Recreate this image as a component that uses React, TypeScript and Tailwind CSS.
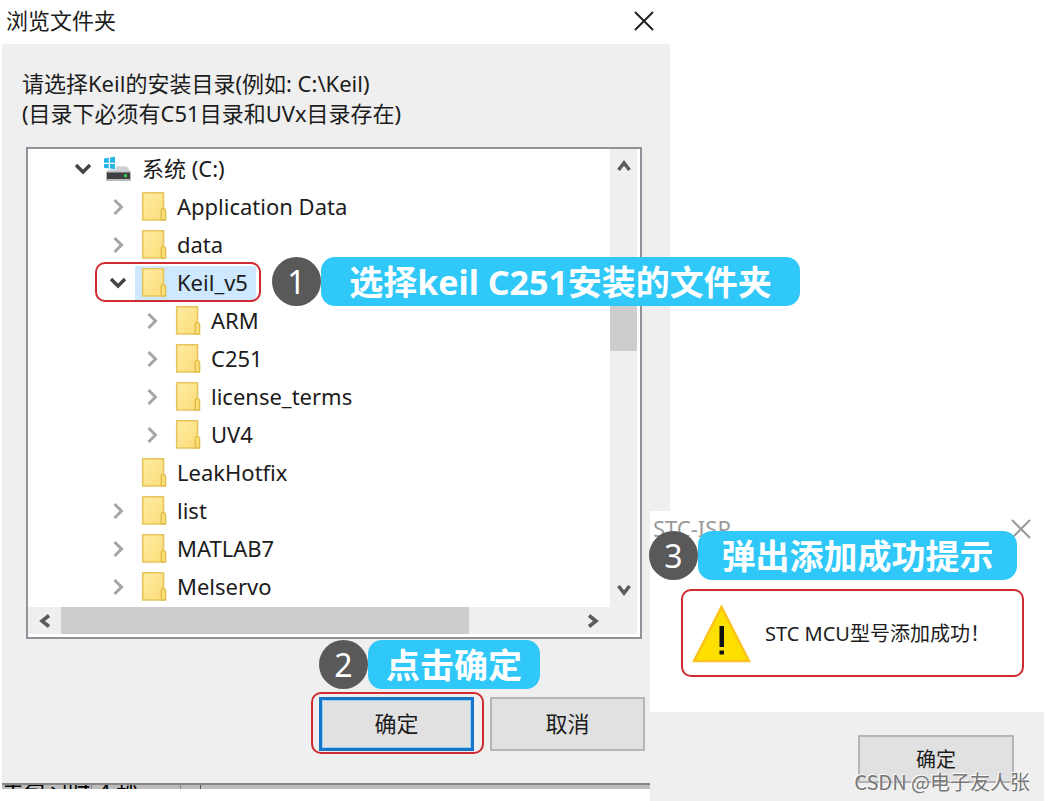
import type { ReactNode } from "react";

type IconName = "drive" | "folder";

interface TreeItem {
	name: string;
	level: 0 | 1 | 2;
	icon: IconName;
	state: "open" | "closed" | "leaf";
	selected?: boolean;
}

const items: TreeItem[] = [
	{ name: "系统 (C:)", level: 0, icon: "drive", state: "open" },
	{ name: "Application Data", level: 1, icon: "folder", state: "closed" },
	{ name: "data", level: 1, icon: "folder", state: "closed" },
	{ name: "Keil_v5", level: 1, icon: "folder", state: "open", selected: true },
	{ name: "ARM", level: 2, icon: "folder", state: "closed" },
	{ name: "C251", level: 2, icon: "folder", state: "closed" },
	{ name: "license_terms", level: 2, icon: "folder", state: "closed" },
	{ name: "UV4", level: 2, icon: "folder", state: "closed" },
	{ name: "LeakHotfix", level: 1, icon: "folder", state: "leaf" },
	{ name: "list", level: 1, icon: "folder", state: "closed" },
	{ name: "MATLAB7", level: 1, icon: "folder", state: "closed" },
	{ name: "Melservo", level: 1, icon: "folder", state: "closed" },
];

const indent = {
	0: "pl-[42px]",
	1: "pl-[77px]",
	2: "pl-[111px]",
};

function FolderIcon() {
	return (
		<svg width="30" height="30" viewBox="0 0 30 30" aria-hidden="true">
			<defs>
				<linearGradient id="folder" x1="0" y1="0" x2="1" y2="1">
					<stop offset="0" stopColor="#ffeca3" />
					<stop offset="1" stopColor="#fbdc78" />
				</linearGradient>
			</defs>
			<path
				d="M3.700 .8H24.500V28H3.700z"
				fill="url(#folder)"
				stroke="#e6c65c"
				strokeWidth="1.600"
			/>
			<path
				d="M22.300 28V18.500q0-2 2-2t2.300 2V28z"
				fill="#fade78"
				stroke="#e2bd49"
				strokeWidth="1.400"
			/>
		</svg>
	);
}

function DriveIcon() {
	return (
		<svg width="30" height="30" viewBox="0 0 30 30" aria-hidden="true">
			<path d="M7 12.500h16l4 6H2.500z" fill="#cfd0d1" />
			<path d="M2 17.500h25v9.500H2z" fill="#b9babb" />
			<path d="M3 18.500h23v6.500H3z" fill="#3d4143" />
			<circle cx="21.500" cy="21.800" r="1.700" fill="#35d04a" />
			<path d="M-1 2h13v13.500H-1z" fill="#fff" />
			<path
				d="M0 4.500l4.800-.7V8.800H0zM6 3.500l5-.8v6.100H6zM0 10h4.800v4.400l-4.800-.6zM6 10h5v5.200l-5-.7z"
				fill="#27b5e8"
			/>
		</svg>
	);
}

function Chevron({ state }: { state: TreeItem["state"] }) {
	if (state === "leaf") return <span className="w-[26px]" />;
	const open = state === "open";
	return (
		<button
			type="button"
			aria-label={open ? "Collapse" : "Expand"}
			className="flex h-[34px] w-[26px] items-center justify-center"
		>
			<svg width="20" height="20" viewBox="0 0 20 20" fill="none">
				<path
					d={open ? "M3 6l7 7 7-7" : "M6.500 3l7 7-7 7"}
					stroke={open ? "#444" : "#a6a6a6"}
					strokeWidth={open ? 3.400 : 3}
				/>
			</svg>
		</button>
	);
}

const arrows = {
	up: "M4.500 15l5.500-7 5.500 7",
	down: "M4.500 5l5.500 7 5.500-7",
	left: "M14 4.500L7 10l7 5.500",
	right: "M5 4.500L12 10l-7 5.500",
};

function ScrollArrow({ dir }: { dir: keyof typeof arrows }) {
	return (
		<button
			type="button"
			aria-label={`Scroll ${dir}`}
			className="flex h-8 w-full items-center justify-center"
		>
			<svg width="20" height="20" viewBox="0 0 20 20" fill="none">
				<path d={arrows[dir]} stroke="#5c5c5c" strokeWidth="3.600" />
			</svg>
		</button>
	);
}

function CloseButton({ color }: { color: string }) {
	return (
		<button type="button" aria-label="Close" className="p-1">
			<svg width="20" height="20" viewBox="0 0 20 20">
				<path d="M1 1l18 18M19 1L1 19" stroke={color} strokeWidth="2" />
			</svg>
		</button>
	);
}

function Callout({
	step,
	className,
	labelClass,
	children,
}: {
	step: number;
	className: string;
	labelClass: string;
	children: ReactNode;
}) {
	return (
		<div
			className={`absolute z-20 flex items-center whitespace-nowrap text-white ${className}`}
		>
			<span className="flex size-[49px] shrink-0 items-center justify-center rounded-full bg-[#595959] text-[32px] leading-none">
				{step}
			</span>
			<span
				className={`flex h-[49px] items-center justify-center rounded-[14px] bg-[#30c8f9] text-[34px] leading-none font-bold ${labelClass}`}
			>
				{children}
			</span>
		</div>
	);
}

function FolderTree() {
	return (
		<div className="mt-[18px] border-2 border-[#8f939a] bg-white pr-[3px] pb-[3px]">
			<div className="flex">
				<ul className="min-w-0 flex-1 pt-px pb-px">
					{items.map((item) => (
						<li
							key={item.name}
							className={`flex h-[38px] items-center gap-1 ${indent[item.level]}`}
						>
							<Chevron state={item.state} />
							<button
								type="button"
								className={`flex h-[34px] items-center gap-2 pr-2 pl-1 whitespace-nowrap ${
									item.selected ? "bg-[#cde8ff]" : ""
								}`}
							>
								{item.icon === "drive" ? <DriveIcon /> : <FolderIcon />}
								<span>{item.name}</span>
							</button>
						</li>
					))}
				</ul>
				<div className="flex w-[27px] flex-col bg-[#efefef]">
					<ScrollArrow dir="up" />
					<div className="flex flex-1 flex-col pt-[90px] pb-[224px]">
						<div className="flex-1 bg-[#cdcdcd]" />
					</div>
					<ScrollArrow dir="down" />
				</div>
			</div>
			<div className="flex h-[27px] items-center bg-[#efefef] pr-[27px]">
				<div className="w-[33px]">
					<ScrollArrow dir="left" />
				</div>
				<div className="h-full flex-1">
					<div className="h-full w-[79%] bg-[#cdcdcd]" />
				</div>
				<div className="w-[33px]">
					<ScrollArrow dir="right" />
				</div>
			</div>
		</div>
	);
}

function BrowseDialog() {
	return (
		<section className="relative w-full max-w-[670px] pl-0.5">
			<header className="flex h-11 items-center justify-between pr-[12px] pb-0.5 pl-1">
				<h1>浏览文件夹</h1>
				<CloseButton color="#222" />
			</header>
			<div className="bg-[#efefef] pt-6 pr-[28px] pb-8 pl-6">
				<p className="-ml-1 leading-[30px] whitespace-nowrap">
					请选择Keil的安装目录(例如: C:\Keil)
					<br />
					(目录下必须有C51目录和UVx目录存在)
				</p>
				<div className="pt-px">
					<FolderTree />
				</div>
				<div className="mt-[58px] -mr-[3px] flex justify-end gap-4">
					<button
						type="button"
						className="h-[54px] w-[155px] border-[3px] border-[#1576c9] bg-[#e1e1e1] inset-ring inset-ring-[#9ecff5]"
					>
						确定
					</button>
					<button
						type="button"
						className="h-[54px] w-[155px] border-2 border-[#b5b5b5] bg-[#e1e1e1]"
					>
						取消
					</button>
				</div>
			</div>
			{/* sliver of the window lying behind the dialog */}
			<div className="flex h-[6px] items-start overflow-hidden border-t-2 border-[#868686] bg-[#bcbcbc] text-[22px] leading-[22px] text-black">
				<span className="-mt-[5px] w-[90px] shrink-0 border-r border-[#8a8a8a]">
					未包习时
				</span>
				<span className="-mt-[5px] w-[89px] shrink-0 border-r border-[#8a8a8a] pl-1.5">
					4 秒
				</span>
				<span className="h-full w-5 border-r border-[#555]" />
			</div>

			<div className="absolute top-[262px] left-[95px] h-10 w-[166px] rounded-[10px] border-2 border-[#cf2a2f]" />
			<Callout step={1} className="top-[257px] left-[272px]" labelClass="w-[479px]">
				选择keil C251安装的文件夹
			</Callout>
			<div className="absolute top-[692px] left-[311px] h-[62px] w-[173px] rounded-[10px] border-2 border-[#cf2a2f]" />
			<Callout step={2} className="top-[640px] left-[319px]" labelClass="w-[172px]">
				点击确定
			</Callout>
		</section>
	);
}

function MessageBox() {
	return (
		<section className="absolute top-[511px] right-0 bottom-0 z-10 flex w-[395px] flex-col bg-white text-[20px]">
			<header className="flex h-[36px] items-center justify-between pr-[10px] pl-[3px] text-[#9a9a9a]">
				<h2 className="text-[22px]">STC-ISP</h2>
				<CloseButton color="#999" />
			</header>
			<Callout step={3} className="top-5 -left-px" labelClass="w-[319px]">
				弹出添加成功提示
			</Callout>
			<div className="mt-[42px] mr-[21px] mb-[35px] ml-[31px] flex h-[88px] items-center gap-[14px] rounded-[10px] border-2 border-[#cf2a2f] pl-[9px]">
				<svg width="59" height="59" viewBox="0 0 59 59" aria-hidden="true">
					<path
						d="M29.500 3L57 57H2z"
						fill="#fde000"
						stroke="#fcc21c"
						strokeWidth="2.500"
					/>
					<path d="M27.500 22h4.500v21h-4.500zM27.500 46.500h4.500v4h-4.500z" fill="#111" />
				</svg>
				<p className="whitespace-nowrap">STC MCU型号添加成功！</p>
			</div>
			<footer className="mr-px flex flex-1 items-start justify-end bg-[#efefef] pt-[23px] pr-[30px]">
				<button
					type="button"
					className="h-[48px] w-[156px] border-2 border-[#b5b5b5] bg-[#e1e1e1]"
				>
					确定
				</button>
			</footer>
			<span className="absolute right-[15px] bottom-1 text-[20px] leading-[30px] whitespace-nowrap text-[#777] [font-family:'Noto_Sans_CJK_SC',sans-serif] [text-shadow:-1px_-1px_0_#fff]">
				CSDN @电子友人张
			</span>
		</section>
	);
}

export default function App() {
	return (
		<main className="relative min-h-screen overflow-hidden bg-white font-['Noto_Sans','Noto_Sans_CJK_SC',sans-serif] text-[22px] leading-tight text-[#1c1c1c]">
			<BrowseDialog />
			<MessageBox />
		</main>
	);
}
